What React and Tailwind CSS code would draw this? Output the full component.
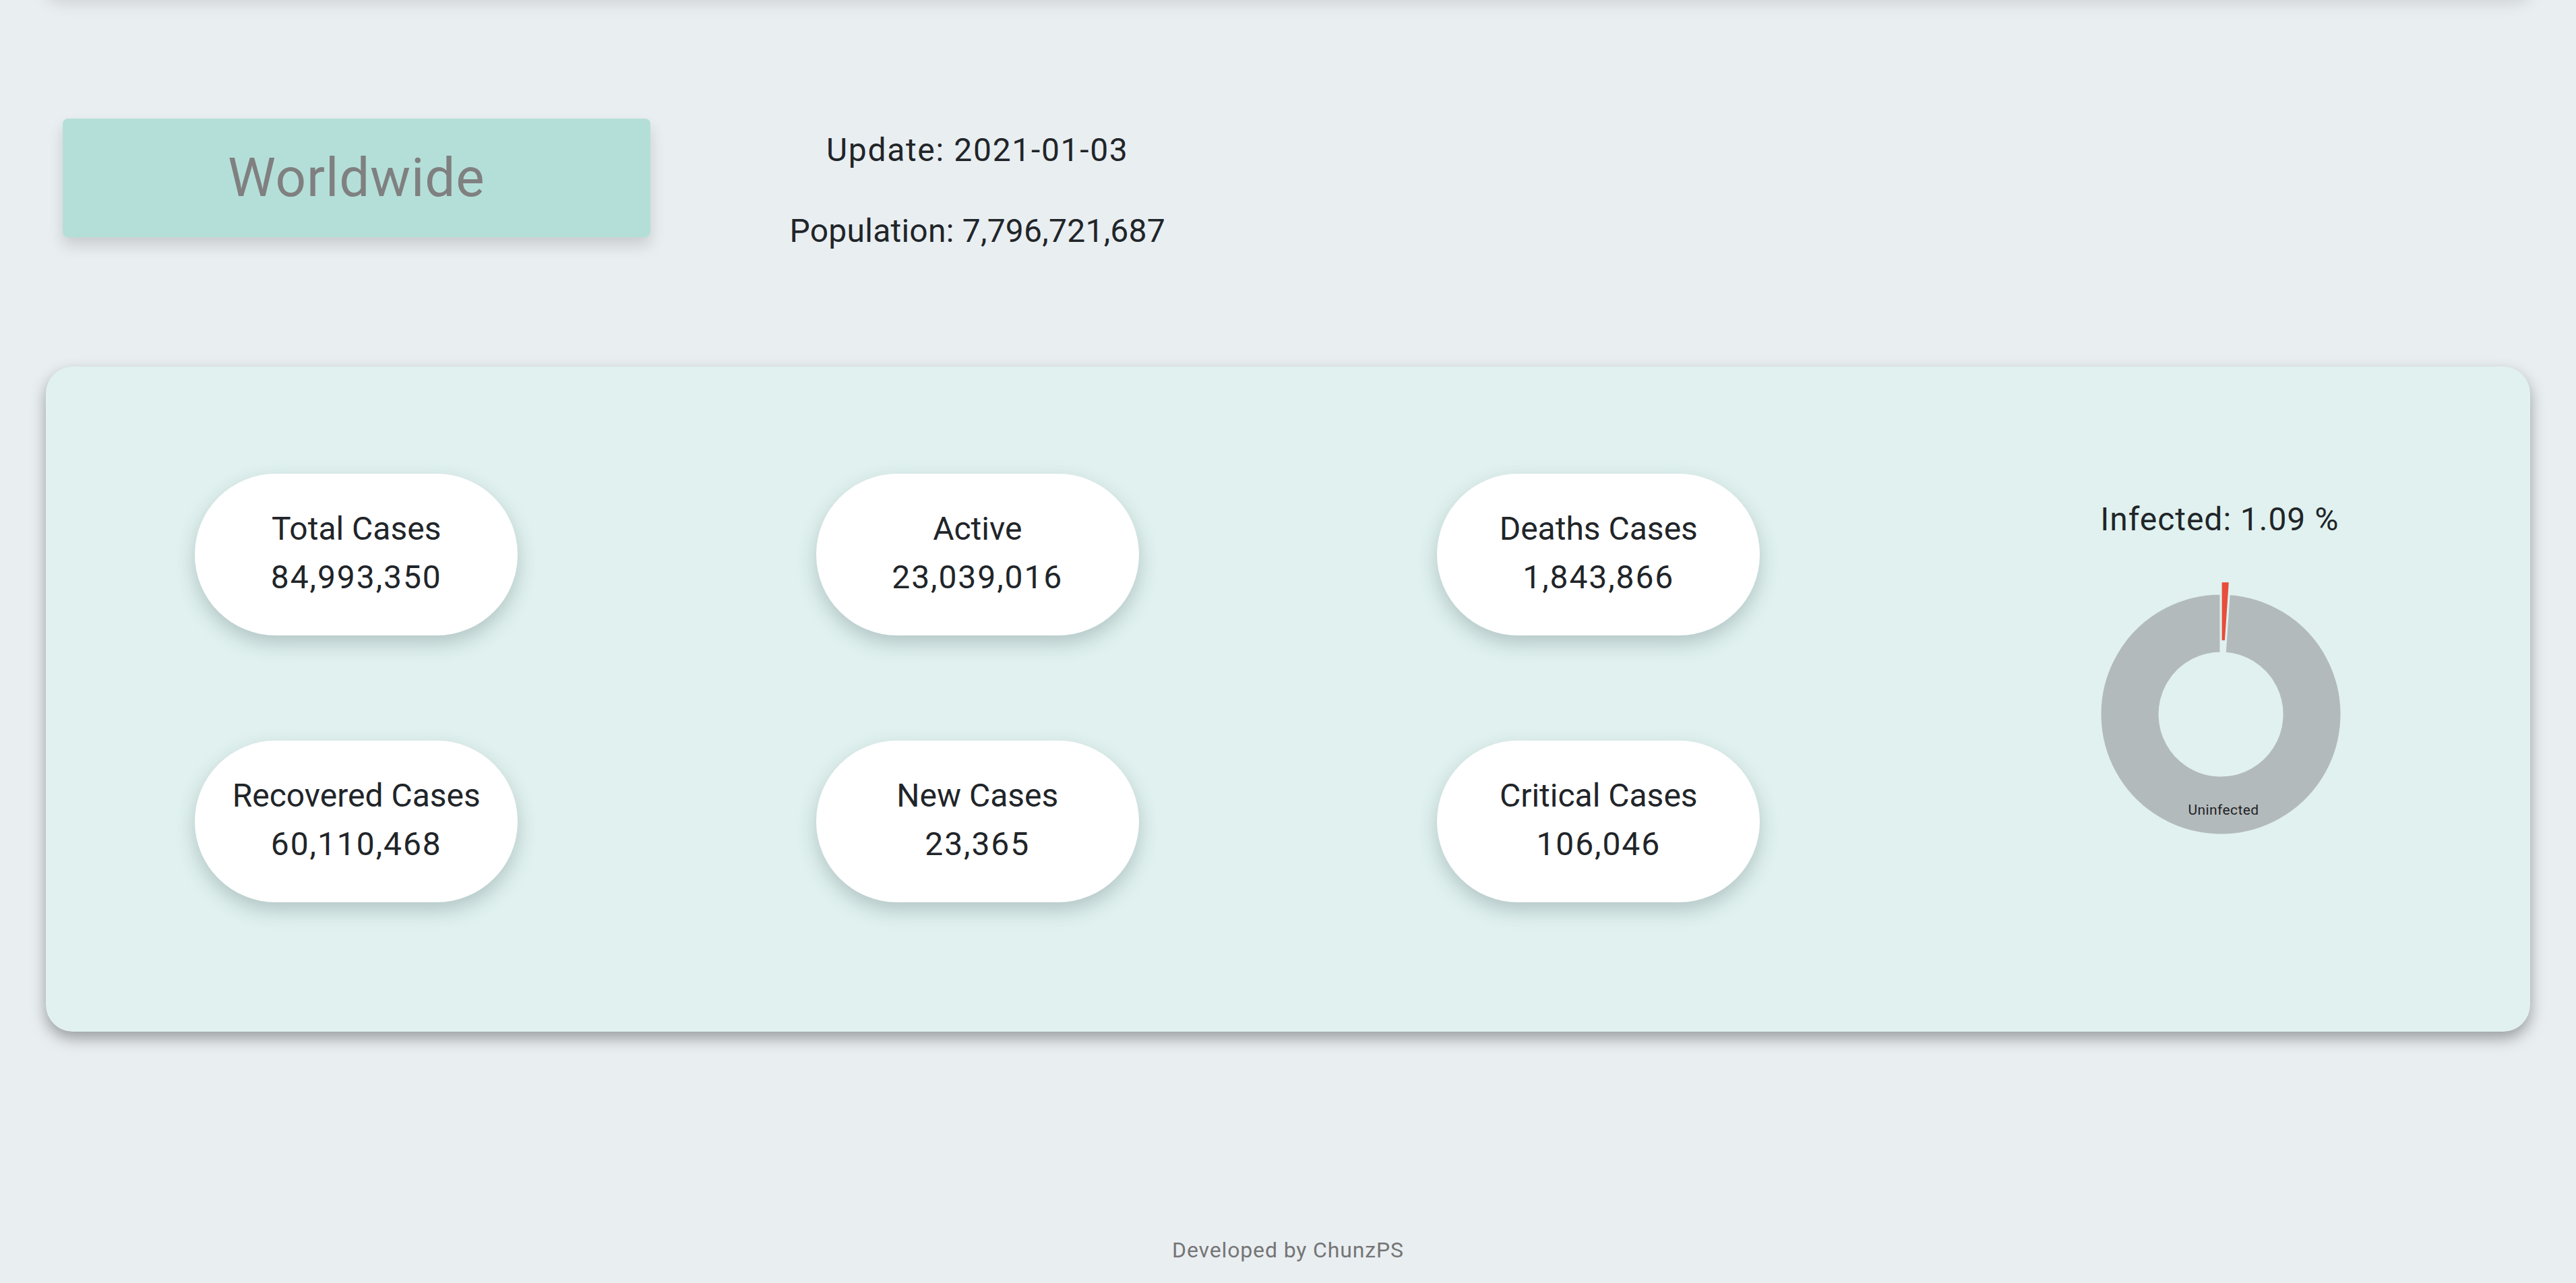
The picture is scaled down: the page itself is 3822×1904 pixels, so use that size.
import React from "react";

const stats = [
  { label: "Total Cases", value: "84,993,350" },
  { label: "Active", value: "23,039,016" },
  { label: "Deaths Cases", value: "1,843,866" },
  { label: "Recovered Cases", value: "60,110,468" },
  { label: "New Cases", value: "23,365" },
  { label: "Critical Cases", value: "106,046" },
];

function Pill({ label, value }) {
  return (
    <div className="flex justify-center">
      <div className="flex h-[240px] w-[479px] flex-col items-center justify-center rounded-full bg-white pb-[4px] text-[48px] leading-[72px] text-[#212529] shadow-[0_12px_28px_rgba(60,90,90,0.28)]">
        <span>{label}</span>
        <span className="tracking-[0.04em]">{value}</span>
      </div>
    </div>
  );
}

function Donut() {
  return (
    <svg width="400" height="400" viewBox="0 0 400 400">
      <path
        d="M 212.25 21.42 A 179 179 0 1 1 200 21 L 200 109 A 91 91 0 1 0 206.23 109.21 Z"
        fill="#b3babb"
        stroke="#e0f1ef"
        strokeWidth="3"
      />
      <path
        d="M 200.62 3.01 A 179 179 0 0 1 212.87 3.43 L 206.85 91.22 A 91 91 0 0 0 200.62 91.01 Z"
        fill="#e74c3c"
        stroke="#e0f1ef"
        strokeWidth="2"
      />
      <text
        x="204"
        y="349"
        textAnchor="middle"
        fontSize="21"
        letterSpacing="0.4"
        fill="#1f2326"
        fontFamily="Roboto, sans-serif"
      >
        Uninfected
      </text>
    </svg>
  );
}

export default function App() {
  return (
    <div className="flow-root min-h-[1904px] bg-[#e9eef1] font-['Roboto',_'Liberation_Sans',_sans-serif] text-[#212529]">
      <div className="mx-[68px]">
        {/* navbar shadow from above the fold */}
        <div className="-mt-[100px] h-[100px] rounded-b-[20px] bg-[#e9eef1] shadow-[0_4px_24px_rgba(0,0,0,0.12)]" />

        {/* header row */}
        <div className="mt-[176px] grid h-[176px] grid-cols-4">
          <div className="px-[25px]">
            <div className="flex h-[176px] items-center justify-center rounded-[8px] bg-[#b4dfd9] shadow-[0_12px_22px_rgba(0,0,0,0.14)]">
              <span className="text-[80px] leading-none tracking-[0.01em] text-[#808080]">Worldwide</span>
            </div>
          </div>
          <div className="flex flex-col items-center gap-[48px] pt-[11px] text-[48px] leading-[72px]">
            <p className="tracking-[0.035em]">Update: 2021-01-03</p>
            <p className="tracking-[0.005em]">Population: 7,796,721,687</p>
          </div>
        </div>

        {/* main card */}
        <div className="mt-[192px] grid h-[987px] grid-cols-4 rounded-[40px] bg-[#e0f1ef] shadow-[0_10px_22px_rgba(0,0,0,0.34)]">
          <div className="col-span-3 grid grid-cols-3 content-start gap-y-[156px] pt-[159px]">
            {stats.map((s) => (
              <Pill key={s.label} label={s.label} value={s.value} />
            ))}
          </div>
          <div className="flex flex-col items-center pt-[191px]">
            <p className="text-[48px] leading-[72px] tracking-[0.02em]">Infected: 1.09 %</p>
            <div className="mt-[53px] pl-[4px]">
              <Donut />
            </div>
          </div>
        </div>
      </div>

      <footer className="mt-[300px] text-center text-[32px] leading-[48px] tracking-[0.027em] text-[#757575]">
        Developed by ChunzPS
      </footer>
    </div>
  );
}
